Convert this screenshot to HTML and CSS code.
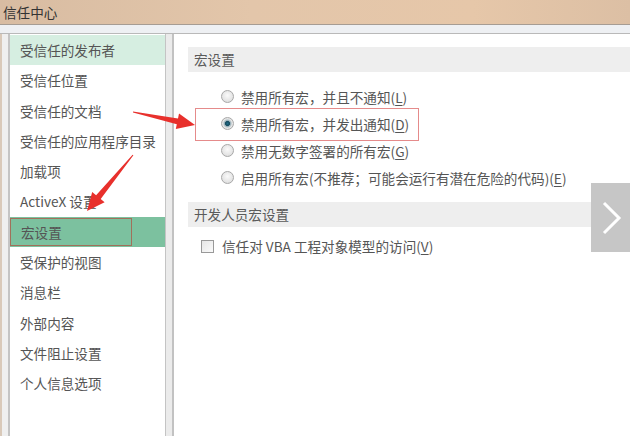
FILE: index.html
```html
<!DOCTYPE html>
<html lang="zh">
<head>
<meta charset="utf-8">
<link rel="stylesheet" href="styles.css">
</head>
<body>
<div class="win">
  <div class="titlebar">信任中心</div>
  <div class="strip"></div>
  <div class="main">
    <ul class="nav">
      <li class="item soft">受信任的发布者</li>
      <li class="item">受信任位置</li>
      <li class="item">受信任的文档</li>
      <li class="item">受信任的应用程序目录</li>
      <li class="item">加载项</li>
      <li class="item">ActiveX 设置</li>
      <li class="item active"><span class="mark">宏设置</span></li>
      <li class="item">受保护的视图</li>
      <li class="item">消息栏</li>
      <li class="item">外部内容</li>
      <li class="item">文件阻止设置</li>
      <li class="item">个人信息选项</li>
    </ul>
    <div class="sep"></div>
    <div class="content">
      <div class="band first">宏设置</div>
      <div class="options">
        <div class="opt"><span class="radio"></span><span>禁用所有宏，并且不通知(<u>L</u>)</span></div>
        <div class="opt hl"><span class="radio on"></span><span>禁用所有宏，并发出通知(<u>D</u>)</span></div>
        <div class="opt"><span class="radio"></span><span>禁用无数字签署的所有宏(<u>G</u>)</span></div>
        <div class="opt"><span class="radio"></span><span>启用所有宏(不推荐；可能会运行有潜在危险的代码)(<u>E</u>)</span></div>
      </div>
      <div class="band second">开发人员宏设置</div>
      <div class="check-row"><span class="check"></span><span>信任对 VBA 工程对象模型的访问(<u>V</u>)</span></div>
    </div>
  </div>
  <div class="next">
    <svg width="39" height="69" viewBox="0 0 39 69"><polyline points="13,20 28,35 13,50" fill="none" stroke="#ffffff" stroke-width="3"/></svg>
  </div>
  <svg class="arrows" width="630" height="436" viewBox="0 0 630 436">
    <polygon fill="#e8302c" points="133,111.5 178,118.4 179,113.5 195,125 175.8,129.1 176.8,124.2 133,112.5"/>
    <polygon fill="#e8302c" points="133.4,155.3 100.7,199 104.6,202.2 87,211 92.2,192 96.1,195.2 132.6,154.7"/>
  </svg>
</div>
</body>
</html>
```
FILE: styles.css
```css
* { box-sizing: border-box; }
html, body { margin: 0; padding: 0; }
body {
  width: 630px;
  height: 436px;
  overflow: hidden;
  font-family: "Noto Sans CJK SC", "Noto Sans", sans-serif;
  font-size: 13.6px;
  color: #555555;
}
.win {
  position: relative;
  width: 630px;
  height: 436px;
  background: #efefef;
  display: flex;
  flex-direction: column;
}
.titlebar {
  height: 25px;
  line-height: 24px;
  padding-left: 3px;
  color: #333333;
  background: linear-gradient(90deg, #d8bca2 0%, #e3c6aa 40%, #e6c7a9 75%, #dcbfa4 100%);
  border-bottom: 1px solid #a69c93;
}
.strip {
  height: 9px;
  background: #eef0f3;
  border-bottom: 1px solid #b9b9b9;
}
.main {
  flex: 1;
  display: flex;
  padding-left: 8px;
  min-height: 0;
  border-left: 2px solid #d9c9b9;
}
.nav {
  list-style: none;
  margin: 0;
  padding: 1px 0 0 0;
  width: 158px;
  margin-left: -2px;
  background: #ffffff;
  border-left: 2px solid #c4c4c4;
  border-right: 1px solid #c4c4c4;
}
.item {
  height: 30.3px;
  line-height: 30px;
  padding-left: 10px;
  white-space: nowrap;
}
.item.soft { background: #d6eee1; }
.item.active {
  background: #7cc19f;
  padding-left: 0;
  padding-top: 1px;
}
.mark {
  display: block;
  width: 122px;
  height: 28px;
  line-height: 26px;
  padding-left: 10px;
  border: 1px solid #a1705a;
}
.sep {
  width: 8px;
  background: #ebebeb;
  border-right: 2px solid #c2c2c2;
}
.content {
  flex: 1;
  background: #ffffff;
  padding-left: 14px;
}
.band {
  height: 25px;
  line-height: 25px;
  padding-left: 6px;
  background: #eeeeee;
  color: #5a5a5a;
}
.band.first { margin-top: 13px; }
.band.second { margin-top: 11px; }
.options { margin-top: 11px; }
.opt {
  height: 27px;
  display: flex;
  align-items: center;
  gap: 7px;
  padding-left: 33px;
  white-space: nowrap;
}
.radio {
  width: 13px;
  height: 13px;
  border-radius: 50%;
  border: 1px solid #a8a8a8;
  background: radial-gradient(circle at 50% 40%, #fafafa 0%, #e2e2e2 70%, #cfcfcf 100%);
  flex: none;
}
.radio.on {
  background: radial-gradient(circle, #1f6a86 0%, #164c60 28%, #8fa9b3 36%, #e8e8e8 60%, #d0d0d0 100%);
}
u { text-decoration: underline; text-underline-offset: 2px; }
.check-row {
  margin-top: 6px;
  height: 26px;
  display: flex;
  align-items: center;
  gap: 8px;
  padding-left: 13px;
  white-space: nowrap;
}
.check {
  width: 13px;
  height: 13px;
  border: 1px solid #999999;
  background: linear-gradient(135deg, #e6e6e6, #fafafa);
  flex: none;
}
.opt.hl { position: relative; }
.opt.hl::before {
  content: "";
  position: absolute;
  left: 7px;
  top: -2px;
  width: 222px;
  height: 31px;
  border: 1.5px solid #e58b8b;
}
.next {
  position: absolute;
  right: 0;
  top: 183px;
  width: 39px;
  height: 69px;
  background: #c6c6c6;
}
.next svg { display: block; }
.arrows {
  position: absolute;
  left: 0;
  top: 0;
  pointer-events: none;
}
```
